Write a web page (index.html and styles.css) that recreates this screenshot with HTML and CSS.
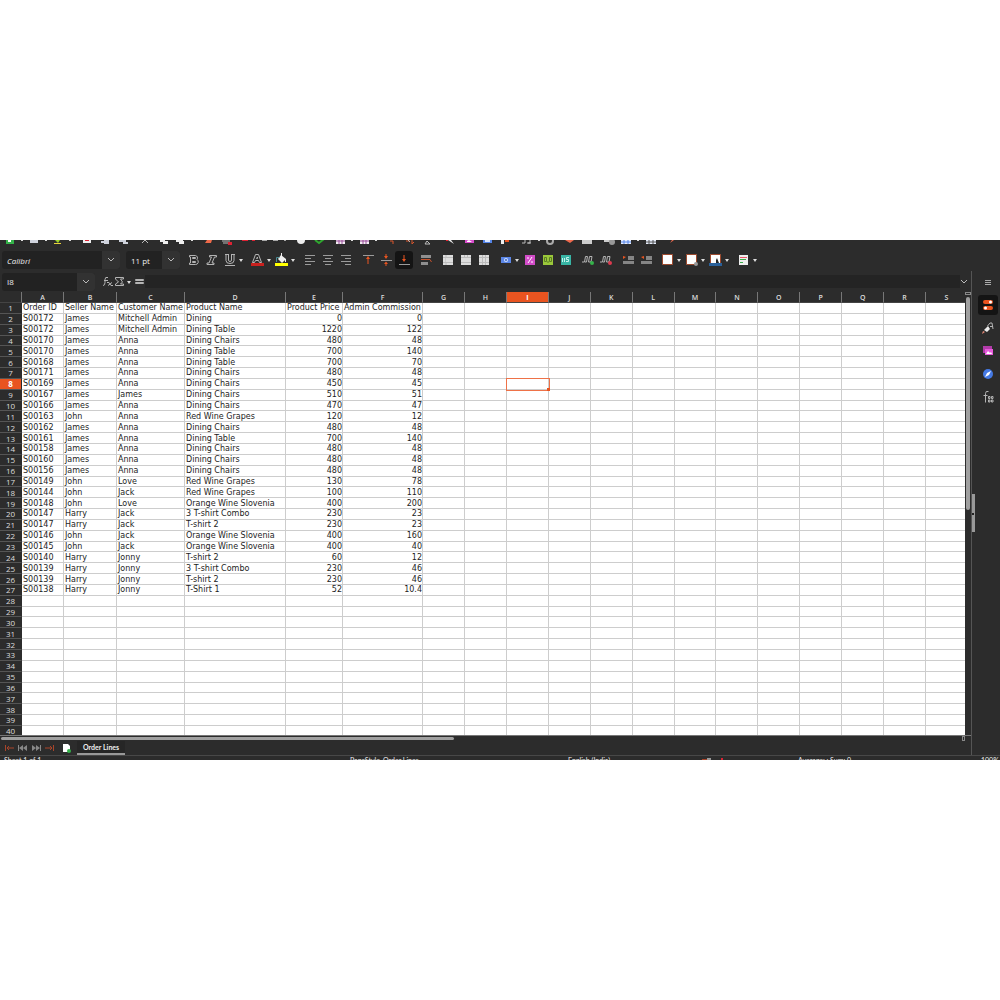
FILE: index.html
```html
<!DOCTYPE html>
<html lang="en">
<head>
<meta charset="utf-8">
<title>Order Lines</title>
<link rel="stylesheet" href="styles.css">
</head>
<body>
<main class="app">
  <div class="standard-bar" aria-hidden="true">
    <svg width="700" height="6" viewBox="0 0 700 6">
      <path fill="#35b34a" d="M6 0h8v4H6z"/><path fill="#fff" d="M8 0h3v2H8z"/>
      <path fill="#cfd3dd" d="M30 0h8v3h-8zM101 1h8v2h-8zM104 0h5v4h-5zM119 0h7v2h-7zM123 2h5v2h-5z"/>
      <path fill="#9bd32c" d="M55 0h5l-2 3z"/><path fill="#e8d23a" d="M54 3h7v1h-7z"/>
      <path fill="#eee" d="M83 0h8v3h-8zM160 0h5v2h-5zM163 1h5v3h-5zM176 0h7v2h-7zM179 1h5v3h-5z"/><path fill="#d23" d="M85 0h4v1h-4z"/>
      <path stroke="#bbb" fill="none" d="M142 3l3-3 3 3M222 1h8M223 3h6M527 3h3V0M531 3h-3M522 3h3V0"/>
      <path fill="#ef6a4a" d="M205 3l2-3h5l-1 3z"/><path fill="#d23" d="M228 2h4v3h-4zM242 0h6v1h-6zM252 0h3v1h-3z"/>
      <path fill="#aaa" d="M262 0h5v1h-5zM273 0h5v1h-5zM284 0h2v1h-2z"/>
      <circle cx="301" cy="0" r="4" fill="#eee"/>
      <path stroke="#2fa82f" stroke-width="2" fill="none" d="M315 0l4 3 5-4"/>
      <path fill="#f1eef1" d="M336 0h9v4h-9zM360 0h9v4h-9z"/><path stroke="#9a4d9b" d="M336 1h9M360 1h9M339 0v4M342 0v4M363 0v4M366 0v4"/>
      <path stroke="#d9562c" stroke-width="1" fill="none" d="M390 1h3v3M406 1h4M412 0v4l2-2"/>
      <path stroke="#bbb" fill="none" d="M425 4l2-3 3 3zM408 0l2 2"/>
      <path fill="#eee" d="M448 0h3l3 4z"/><path fill="#e23" d="M446 0h2v1h-2z"/>
      <path fill="#d84ccc" d="M465 0h9v3h-9z"/><path fill="#fff" d="M467 1l2-1 3 2h-5z"/>
      <path fill="#5484e8" d="M483 0h9v3h-9z"/><path fill="#dce8ff" d="M485 0h5v2h-5z"/>
      <path fill="#eee" d="M501 0h3v4h-3z"/><path fill="#e95420" d="M505 0h4v2h-4z"/>
      <circle cx="550" cy="1" r="3" stroke="#aaa" fill="none" stroke-width="2"/>
      <path fill="#f06a4e" d="M565 0h9l-4 3z"/><path fill="#ccc" d="M582 0h10v4h-10zM604 0h8v2h-8z"/><circle cx="612" cy="2" r="3" fill="#999"/>
      <path fill="#e7eefc" d="M621 0h10v4h-10zM646 0h10v4h-10z"/><path stroke="#5484e8" d="M621 2h10M624 0v4M628 0v4"/><path stroke="#555" d="M646 2h10M649 0v4M653 0v4"/>
      <path fill="#f06a4e" d="M670 3l2-3h2z"/>
      <path fill="#ddd" d="M21 0h2v1h-2zM45 0h2v1h-2zM69 0h2v1h-2zM191 0h2v1h-2zM351 0h2v1h-2zM375 0h2v1h-2zM538 0h2v1h-2zM637 0h2v1h-2z"/>
    </svg>
  </div>

  <div class="format-bar">
    <span class="combo combo-font">
      <select aria-label="Font name"><option>Calibri</option></select>
      <svg class="chevron" width="18" height="18"><path d="M6 7l3 3 3-3"/></svg>
    </span>
    <span class="combo combo-size">
      <select aria-label="Font size"><option>11 pt</option></select>
      <svg class="chevron" width="18" height="18"><path d="M6 7l3 3 3-3"/></svg>
    </span>
    <div class="tools">
      <div class="group">
        <button aria-label="Bold"><svg width="18" height="18"><path class="ln" d="M4.500 4.500h6a2.500 2.500 0 0 1 1.500 4a2.700 2.700 0 0 1-1.500 5h-6v-1.500h1v-6h-1zM7.500 6.500v1h3v-1zM7.500 10.500v1h3v-1z"/></svg></button>
        <button aria-label="Italic"><svg width="18" height="18"><path class="ln" d="M6.500 4.500h7v1.500h-2l-2.500 6h2v1.500h-7V12h2l2.500-6h-2z"/></svg></button>
        <button class="wide" aria-label="Underline"><svg width="24" height="18"><path class="ln" d="M4 3.500h4M10 3.500h4M5 4v5.500q0 3 4 3t4-3V4M7.500 4v5q0 1.500 1.500 1.500T10.500 9V4M4 14.500h10"/><path class="dd" d="M18 8h4l-2 3z"/></svg></button>
      </div>
      <div class="group">
        <button class="wide" aria-label="Font color"><svg width="24" height="18"><path class="ln" d="M3.500 11.500l3-8h3l3 8h-2l-1-2h-3l-1 2zM7.500 7.500h1V6z"/><path fill="#c9211e" d="M2 12h13v3H2z"/><path class="dd" d="M18 8h4l-2 3z"/></svg></button>
        <button class="wide" aria-label="Highlight color"><svg width="24" height="18"><path fill="#eee" d="M8 4l5 4-4 4-4-4z"/><path fill="none" stroke="#4d8d94" d="M3.500 11V6.500h3"/><path stroke="#eee" d="M8.500 6V2M12.500 8v3"/><path fill="#ff0" d="M2 12h13v3H2z"/><path class="dd" d="M18 8h4l-2 3z"/></svg></button>
      </div>
      <div class="group">
        <button aria-label="Align left"><svg width="18" height="18"><path class="bars" d="M4 4.500h10M4 7.500h6M4 10.500h10M4 13.500h6"/></svg></button>
        <button aria-label="Center"><svg width="18" height="18"><path class="bars" d="M4 4.500h10M6 7.500h6M4 10.500h10M6 13.500h6"/></svg></button>
        <button aria-label="Align right"><svg width="18" height="18"><path class="bars" d="M4 4.500h10M8 7.500h6M4 10.500h10M8 13.500h6"/></svg></button>
      </div>
      <div class="group">
        <button aria-label="Align top"><svg width="18" height="18"><path class="bars" d="M4 4.500h11"/><path class="or" d="M9 5l2 3H9.500v5h-1V8H7z"/></svg></button>
        <button aria-label="Center vertically"><svg width="18" height="18"><path class="bars" d="M4 9.500h11"/><path class="or" d="M8.500 3h1v2H11L9 8 7 5h1.500zM9 10.500L11 13H9.500v2h-1v-2H7z"/></svg></button>
        <button class="on" aria-label="Align bottom" aria-pressed="true"><svg width="18" height="18"><path class="bars" d="M4 13.500h11"/><path class="or" d="M8.500 4h1v4H11l-2 3-2-3h1.500z"/></svg></button>
      </div>
      <div class="group">
        <button aria-label="Wrap text"><svg width="18" height="18"><path fill="#8f8f8f" d="M4 4h10v3H4zM4 11h7v3H4z"/><path d="M4 8.500h9l1.500 2.500" stroke="#c4522c" fill="none"/></svg></button>
      </div>
      <div class="group">
        <button aria-label="Merge and center"><svg width="18" height="18"><path fill="#ddd" d="M4 4h10v10H4z"/><path stroke="#bbb" d="M4 6.500h10M7 4v10M4 11.500h10"/><path fill="#ddd" d="M7 7h6v4H7z"/></svg></button>
        <button aria-label="Merge cells"><svg width="18" height="18"><path fill="#ddd" d="M4 4h10v10H4z"/><path stroke="#bbb" d="M4 6.500h10M4 11.500h10M10.500 4v3M7.500 4v3"/></svg></button>
        <button aria-label="Split cells"><svg width="18" height="18"><path fill="#ddd" d="M4 4h10v10H4z"/><path stroke="#bbb" d="M4 6.500h10M4 11.500h10M7.500 4v10M10.500 4v10"/></svg></button>
      </div>
      <div class="group">
        <button class="wide" aria-label="Currency"><svg width="24" height="18"><path fill="#5b86e5" d="M4 6h10v6H4z"/><circle cx="9" cy="9" r="2" fill="#cfe0ff"/><circle cx="9" cy="9" r="1" fill="#3d63b8"/><path class="dd" d="M18 8h4l-2 3z"/></svg></button>
        <button aria-label="Percent"><svg width="18" height="18"><path fill="#d24cc8" d="M4 4h10v10H4z"/><path stroke="#fff" fill="none" d="M11 6l-4 6M6 7h2M10 11h2"/></svg></button>
        <button aria-label="Number"><svg width="18" height="18"><path fill="#9bc83a" d="M4 4h10v10H4z"/><path stroke="#5b7d26" fill="none" d="M5.500 6.500h2v4h-2zM10.500 6.500h2v4h-2zM9 10v2"/></svg></button>
        <button aria-label="Date"><svg width="18" height="18"><path fill="#38b5a5" d="M4 4h10v10H4z"/><path stroke="#c7f2ec" fill="none" d="M5.500 7v4M7.500 7v4M12 6.500H9.500v2h2v2H9"/></svg></button>
      </div>
      <div class="group">
        <button aria-label="Add decimal place"><svg width="18" height="18"><path class="ln" d="M5.500 11l1-5.500h2l-1 5.500zM9.500 11l1-5.500h2.500l-1 5.500zM3 11h2"/><circle cx="13" cy="12" r="2" fill="#35b34a"/></svg></button>
        <button aria-label="Delete decimal place"><svg width="18" height="18"><path class="ln" d="M5.500 11l1-5.500h2l-1 5.500zM9.500 11l1-5.500h2.500l-1 5.500zM3 11h2"/><circle cx="13" cy="12" r="2" fill="#dc3a4e"/></svg></button>
      </div>
      <div class="group">
        <button aria-label="Increase indent"><svg width="18" height="18"><path fill="#858585" d="M9 5h6v4H9zM4 10h11v3H4z"/><path class="or" d="M4 5l3 1-3 2z"/></svg></button>
        <button aria-label="Decrease indent"><svg width="18" height="18"><path fill="#858585" d="M9 5h6v4H9zM4 10h11v3H4z"/><path class="or" d="M7 5L4 6l3 2z"/></svg></button>
      </div>
      <div class="group">
        <button class="wide" aria-label="Borders"><svg width="24" height="18"><path fill="#fff" stroke="#9c4a2e" d="M3.500 3.500h10v10h-10z"/><path class="dd" d="M18 8h4l-2 3z"/></svg></button>
        <button class="wide" aria-label="Border style"><svg width="24" height="18"><path fill="#fff" stroke="#9c4a2e" d="M3.500 3.500h10v10h-10z"/><circle cx="13" cy="13" r="2" fill="#999"/><path class="dd" d="M18 8h4l-2 3z"/></svg></button>
        <button class="wide" aria-label="Border color"><svg width="24" height="18"><path fill="#fff" stroke="#9c4a2e" d="M3.500 3.500h10v9h-10z"/><path fill="#222" d="M9 12V9l1-2 2 5z"/><path fill="#2a6099" d="M2 12h13v3H2z"/><path class="dd" d="M18 8h4l-2 3z"/></svg></button>
      </div>
      <div class="group">
        <button class="wide" aria-label="Conditional formatting"><svg width="24" height="18"><path fill="#eee" d="M4 4h9v10H4z"/><path stroke="#e8596a" d="M5 6.500h7"/><path stroke="#39ad4a" d="M5 8.500h6M5 11.500h3"/><path class="dd" d="M18 8h4l-2 3z"/></svg></button>
      </div>
    </div>
  </div>

  <div class="workspace">
    <section class="document">
      <div class="formula-bar">
        <span class="combo combo-name">
          <input aria-label="Name box" value="I8">
          <svg class="chevron" width="18" height="18"><path d="M6 7l3 3 3-3"/></svg>
        </span>
        <button class="fx" aria-label="Function wizard"><svg width="12" height="14"><path class="ln" d="M7 2.500q-3-1-3 2v3q0 3-2 3M3 5.500h4M6 7.500h2l2 3h2M11 7.500l-4 3"/></svg></button>
        <button class="sum" aria-label="Sum"><svg width="20" height="14"><path class="ln" d="M9.500 4V2.500h-8V4l3 3-3 2v1.500h8V9h-3l2-2-2-3z"/><path class="dd" d="M13 6h4l-2 3z"/></svg></button>
        <button class="equal" aria-label="Formula"><svg width="9" height="14"><path class="ln" d="M.500 4.500h8v1h-8zM.500 7.500h8v1h-8z"/></svg></button>
        <input class="formula" aria-label="Formula input">
        <button class="expand" aria-label="Expand formula bar"><svg width="8" height="14"><path d="M1 5l3 3 3-3" fill="none" stroke="#bbb"/></svg></button>
      </div>
      <div class="grid-area">
        <div class="sheet">
          <table id="sheet">
            <colgroup><col class="c-num"><col class="c-a"><col class="c-b"><col class="c-c"><col class="c-d"><col class="c-e"><col class="c-f"></colgroup>
            <thead></thead>
            <tbody></tbody>
          </table>
        </div>
        <div class="vscroll"><span class="split"></span><span class="thumb"></span></div>
      </div>
      <div class="hscroll"><span class="thumb"></span><span class="split"></span></div>
      <nav class="tabs">
        <button aria-label="First sheet"><svg width="14" height="10"><path stroke="#a8452a" fill="none" d="M3.500 2v6M5 5h7M7 3L5 5l2 2"/></svg></button>
        <button aria-label="Previous sheet"><svg width="14" height="10"><path stroke="#888" d="M2.500 2v6"/><path fill="#888" d="M7 2v6L3 5zM11 2v6L7 5z"/></svg></button>
        <button aria-label="Next sheet"><svg width="14" height="10"><path stroke="#888" d="M10.500 2v6"/><path fill="#888" d="M6 2v6l4-3zM2 2v6l4-3z"/></svg></button>
        <button aria-label="Last sheet"><svg width="14" height="10"><path stroke="#a8452a" fill="none" d="M9.500 2v6M1 5h7M6 3l2 2-2 2"/></svg></button>
        <button class="add" aria-label="Add sheet"><svg width="10" height="10"><path fill="#fff" d="M1 1h5l2 2v6H1z"/><circle cx="7" cy="8" r="2" fill="#35b34a"/></svg></button>
        <a class="tab" href="#sheet">Order Lines</a>
      </nav>
    </section>
    <aside class="sidebar">
      <span class="grip"></span>
      <button aria-label="Sidebar settings"><svg width="20" height="20"><path stroke="#aaa" d="M7 8.500h6M7 10.500h6M7 12.500h6"/></svg></button>
      <button class="on" aria-label="Properties"><svg width="20" height="20"><rect x="5" y="5" width="10" height="4" rx="2" fill="#e95420"/><rect x="5" y="11" width="10" height="4" rx="2" fill="#e95420"/><circle cx="12.500" cy="7" r="1.500" fill="#fff"/><circle cx="7.500" cy="13" r="1.500" fill="#fff"/></svg></button>
      <button aria-label="Styles"><svg width="20" height="20"><path fill="#e88976" d="M4 16l1-3 2 1z"/><path fill="#eee" d="M6 12l4-4 2 3-3 3z"/><path class="ln" d="M9.500 8l2.500-3h2l1 6M12 8.500h3"/></svg></button>
      <button aria-label="Gallery"><svg width="20" height="20"><path fill="#b13ba9" d="M5 5h9v7H5z"/><path fill="#e75bdc" d="M7 8h8v6H7z"/><path fill="#fff" d="M8 13l2-3 2 2 1-1 1 2z"/></svg></button>
      <button aria-label="Navigator"><svg width="20" height="20"><circle cx="10" cy="10" r="5" fill="#4479e4"/><path fill="#fff" d="M13 7l-2 4-4 2 2-4z"/></svg></button>
      <button aria-label="Functions"><svg width="20" height="20"><path class="ln" d="M10.500 4.500q-3-1-3 2v9M5.500 8.500h4M10.500 9.500h1.500v2h-1.500zM13.500 9.500H15v2h-1.500zM10.500 13h1.500v2h-1.500zM13.500 13H15v2h-1.500z"/></svg></button>
    </aside>
  </div>

  <footer class="status">
    <span>Sheet 1 of 1</span><span>PageStyle_Order Lines</span><span>English (India)</span><span class="marks"><i class="m-red"></i><i class="m-grey"></i><i class="m-pen"></i></span><span>Average: ; Sum: 0</span><span>100%</span>
  </footer>
</main>
<script src="app.js"></script>
</body>
</html>
```
FILE: styles.css
```css
* { box-sizing: border-box; }

body {
  margin: 0;
  min-height: 100vh;
  display: flex;
  align-items: center;
  background: #fff;
  font-family: "Open Sans", "Noto Sans", sans-serif;
  font-size: 8px;
  color: #eee;
}

.app {
  width: 100%;
  height: 52vh;
  display: flex;
  flex-direction: column;
  overflow: hidden;
  background: #2c2c2c;
}

button {
  display: block;
  padding: 0;
  border: 0;
  background: none;
  color: inherit;
}

svg { display: block; }

.ln { fill: none; stroke: #b4b4b4; }
.dd { fill: #ddd; }
.bars { fill: none; stroke: #9b9b9b; }
.or { fill: #e95420; }

.standard-bar { flex: none; height: 9px; }

.format-bar {
  flex: none;
  height: 22px;
  padding-left: 2px;
  display: flex;
  align-items: center;
}

.combo {
  position: relative;
  display: block;
  height: 18px;
  border-radius: 3px;
  overflow: hidden;
  background: #222;
}

.combo select,
.combo input {
  display: block;
  appearance: none;
  width: 100%;
  height: 18px;
  padding: 0 5px;
  border: 0;
  background: none;
  color: #eee;
  font: 8px "Open Sans", sans-serif;
}

.combo-font { width: 118px; margin-right: 6px; }
.combo-font select { font-style: italic; }
.combo-size { width: 54px; margin-right: 5px; }
.combo-name { width: 93px; }

.chevron {
  position: absolute;
  top: 0;
  right: 0;
  background: #323232;
  fill: none;
  stroke: #bbb;
  pointer-events: none;
}

.tools { display: flex; gap: 4px; }
.group { display: flex; }
.group button { width: 18px; }
.group .wide { width: 24px; }
.group .on { background: #141414; border-radius: 3px; }

.workspace { flex: 1; min-height: 0; display: flex; }

.document {
  flex: 1;
  min-width: 0;
  display: flex;
  flex-direction: column;
}

.formula-bar {
  flex: none;
  height: 21px;
  padding-left: 2px;
  display: flex;
  align-items: center;
}

.fx { margin-left: 6px; }
.sum { margin-left: 1px; }
.equal { margin-left: 1px; }

.formula {
  flex: 1;
  min-width: 0;
  height: 13px;
  margin: 0 0 0 1px;
  padding: 0 4px;
  border: 0;
  background: #242424;
  color: #eee;
}

.expand { width: 11px; }

.grid-area { flex: 1; min-height: 0; display: flex; }

.sheet { flex: 1; min-width: 0; overflow: hidden; }

table {
  width: calc(100% + 3px);
  height: calc(100% + 2px);
  table-layout: fixed;
  border-collapse: separate;
  border-spacing: 0;
  background: #fff;
  color: #1c1c1c;
  font: 8px/8px "DejaVu Sans", sans-serif;
}

.c-num { width: 22px; }
.c-a { width: 42px; }
.c-b { width: 53px; }
.c-c { width: 68px; }
.c-d { width: 101px; }
.c-e { width: 57px; }
.c-f { width: 80px; }

th, td {
  padding: 1px 0 0;
  white-space: nowrap;
  text-align: left;
  border-right: 1px solid #cdcdcd;
  border-bottom: 1px solid #cdcdcd;
}

td { padding-left: 1px; }
td.num { text-align: right; }

th {
  background: #2c2c2c;
  color: #ddd;
  font: 600 7px/8px "Open Sans", sans-serif;
  text-align: center;
}

thead th {
  height: 11px;
  border-right-color: #777;
  border-bottom-color: #444;
}

tbody th {
  font-size: 8px;
  font-weight: 400;
  border-right-color: #2c2c2c;
  border-bottom-color: #555;
}

th.current { background: #e95420; color: #fff; font-weight: 700; }

td.cursor {
  position: relative;
  outline: 1px solid #ee7248;
}

td.cursor::after {
  content: "";
  position: absolute;
  right: -2px;
  bottom: -2px;
  width: 3px;
  height: 3px;
  background: #e95420;
}

.vscroll {
  width: 6px;
  display: flex;
  flex-direction: column;
  align-items: center;
  gap: 2px;
}

.vscroll .split { width: 6px; height: 3px; border: 1px solid #888; }
.vscroll .thumb { width: 4px; height: 48%; border-radius: 2px; background: #a0a0a0; }

.hscroll {
  flex: none;
  height: 6px;
  padding-left: 1px;
  padding-right: 6px;
  display: flex;
  align-items: center;
  justify-content: space-between;
  border-top: 1px solid #777;
}

.hscroll .thumb { width: 47%; height: 3px; border-radius: 2px; background: #a0a0a0; }
.hscroll .split { width: 3px; height: 5px; border: 1px solid #888; }

.tabs {
  flex: none;
  height: 14px;
  padding-left: 2px;
  display: flex;
  align-items: center;
}

.tabs .add { margin-left: 4px; }

.tab {
  height: 14px;
  margin-left: 5px;
  padding: 0 6px;
  border-bottom: 2px solid #999;
  background: #262626;
  color: #eee;
  font: 700 7px/13px Lato, sans-serif;
  text-decoration: none;
}

.sidebar {
  position: relative;
  width: 29px;
  flex: none;
  padding: 1px 1px 0 4px;
  display: flex;
  flex-direction: column;
  align-items: center;
  gap: 3px;
  border-left: 1px solid #555;
}

.sidebar button { width: 20px; height: 20px; }
.sidebar .on { border-radius: 3px; background: #141414; }

.grip {
  position: absolute;
  left: 0;
  top: 46%;
  width: 3px;
  height: 8%;
  background: #999;
}

.grip::after {
  content: "";
  position: absolute;
  left: 0;
  top: 50%;
  width: 2px;
  height: 2px;
  background: #222;
}

.status {
  flex: none;
  height: 5px;
  padding-left: 4px;
  display: grid;
  grid-template-columns: 346fr 218fr 134fr 96fr 183fr 19fr;
  overflow: hidden;
  border-top: 1px solid #484848;
  font-family: Lato, sans-serif;
  font-size: 7px;
  line-height: 9px;
  white-space: nowrap;
}

.marks { display: flex; align-items: flex-start; padding-top: 2px; }
.m-red { width: 5px; height: 1px; background: #a8452a; margin-top: 1px; }
.m-grey { width: 4px; height: 3px; background: #999; margin-right: 10px; }
.m-pen { width: 2px; height: 3px; background: #d23; }
```
FILE: app.js
```js
const orders = [
  ["Order ID", "Seller Name", "Customer Name", "Product Name", "Product Price", "Admin Commission"],
  ["S00172", "James", "Mitchell Admin", "Dining", 0, 0],
  ["S00172", "James", "Mitchell Admin", "Dining Table", 1220, 122],
  ["S00170", "James", "Anna", "Dining Chairs", 480, 48],
  ["S00170", "James", "Anna", "Dining Table", 700, 140],
  ["S00168", "James", "Anna", "Dining Table", 700, 70],
  ["S00171", "James", "Anna", "Dining Chairs", 480, 48],
  ["S00169", "James", "Anna", "Dining Chairs", 450, 45],
  ["S00167", "James", "James", "Dining Chairs", 510, 51],
  ["S00166", "James", "Anna", "Dining Chairs", 470, 47],
  ["S00163", "John", "Anna", "Red Wine Grapes", 120, 12],
  ["S00162", "James", "Anna", "Dining Chairs", 480, 48],
  ["S00161", "James", "Anna", "Dining Table", 700, 140],
  ["S00158", "James", "Anna", "Dining Chairs", 480, 48],
  ["S00160", "James", "Anna", "Dining Chairs", 480, 48],
  ["S00156", "James", "Anna", "Dining Chairs", 480, 48],
  ["S00149", "John", "Love", "Red Wine Grapes", 130, 78],
  ["S00144", "John", "Jack", "Red Wine Grapes", 100, 110],
  ["S00148", "John", "Love", "Orange Wine Slovenia", 400, 200],
  ["S00147", "Harry", "Jack", "3 T-shirt Combo", 230, 23],
  ["S00147", "Harry", "Jack", "T-shirt 2", 230, 23],
  ["S00146", "John", "Jack", "Orange Wine Slovenia", 400, 160],
  ["S00145", "John", "Jack", "Orange Wine Slovenia", 400, 40],
  ["S00140", "Harry", "Jonny", "T-shirt 2", 60, 12],
  ["S00139", "Harry", "Jonny", "3 T-shirt Combo", 230, 46],
  ["S00139", "Harry", "Jonny", "T-shirt 2", 230, 46],
  ["S00138", "Harry", "Jonny", "T-Shirt 1", 52, 10.4]
];
const letters = "ABCDEFGHIJKLMNOPQRS".split("");
const rowCount = 40;
const current = { column: "I", row: 8 };

const table = document.getElementById("sheet");
const headRow = table.tHead.insertRow();

function addHeader(row, text, isCurrent) {
  const th = document.createElement("th");
  th.textContent = text;
  if (isCurrent) th.className = "current";
  row.append(th);
}

addHeader(headRow, "", false);
letters.forEach(letter => addHeader(headRow, letter, letter === current.column));

for (let n = 1; n <= rowCount; n++) {
  const row = table.tBodies[0].insertRow();
  addHeader(row, n, n === current.row);
  letters.forEach((letter, i) => {
    const cell = row.insertCell();
    const value = (orders[n - 1] || [])[i];
    if (value !== undefined) cell.textContent = value;
    if (typeof value === "number") cell.className = "num";
    if (n === current.row && letter === current.column) cell.className = "cursor";
  });
}
```
